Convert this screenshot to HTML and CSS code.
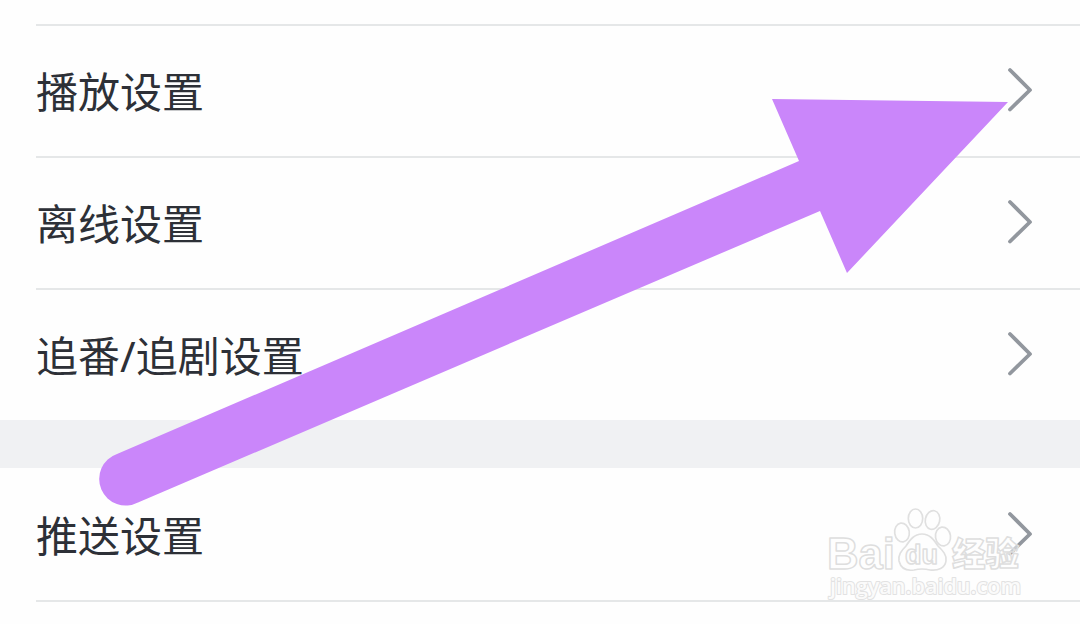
FILE: index.html
```html
<!DOCTYPE html>
<html lang="zh-CN">
<head>
<meta charset="utf-8">
<title>设置</title>
<link rel="stylesheet" href="styles.css">
</head>
<body>
<main class="screen">
  <section class="group group-first">
    <div class="row lined"><span class="label">播放设置</span><svg class="chevron" viewBox="0 0 26 46"><path d="M3 3 23 23 3 42.500"/></svg></div>
    <div class="row lined"><span class="label">离线设置</span><svg class="chevron" viewBox="0 0 26 46"><path d="M3 3 23 23 3 42.500"/></svg></div>
    <div class="row lined"><span class="label">追番<span class="slash">/</span>追剧设置</span><svg class="chevron" viewBox="0 0 26 46"><path d="M3 3 23 23 3 42.500"/></svg></div>
  </section>
  <div class="divider"></div>
  <section class="group">
    <div class="row"><span class="label">推送设置</span><svg class="chevron" viewBox="0 0 26 46"><path d="M3 3 23 23 3 42.500"/></svg></div>
    <div class="row lined"></div>
  </section>
  <svg class="arrow" viewBox="0 0 1080 624">
    <path d="M772 99 1008 102 847 273 820 211 138 502.500A26.500 26.500 0 1 1 117 454L799 161Z"/>
  </svg>
  <svg class="watermark" viewBox="820 500 220 110">
    <g class="mark">
      <ellipse cx="902" cy="532.500" rx="7.300" ry="9.500" transform="rotate(-8 902 532.500)"/>
      <ellipse cx="915.500" cy="518.500" rx="7.200" ry="9.500"/>
      <ellipse cx="932.500" cy="520" rx="7.200" ry="9.500" transform="rotate(12 932.500 520)"/>
      <ellipse cx="943" cy="536.500" rx="7.500" ry="9.500" transform="rotate(-8 943 536.500)"/>
      <path d="M922 534C914 534 910 540 906 546C901 551 898 555 899 561C901 569 907 571 914 570Q922 568 930 570C938 571 945 568 946 561C947 555 943 551 938 546C934 540 930 534 922 534Z"/>
    </g>
    <g class="mark-text">
      <text class="brand" x="827" y="569" textLength="68" lengthAdjust="spacingAndGlyphs">Bai</text>
      <text class="du" x="905" y="564" textLength="33" lengthAdjust="spacingAndGlyphs">du</text>
      <text class="brand-cn" x="952" y="566" textLength="67" lengthAdjust="spacingAndGlyphs">经验</text>
      <text class="site" x="830" y="594" textLength="191" lengthAdjust="spacingAndGlyphs">jingyan.baidu.com</text>
    </g>
  </svg>
</main>
</body>
</html>
```
FILE: styles.css
```css
body {
  margin: 0;
  background: #fefefe;
  font-family: "Noto Sans CJK SC", sans-serif;
}

.screen {
  position: relative;
  width: 1080px;
  height: 624px;
  overflow: hidden;
}

.group {
  padding-left: 36px;
}

.group-first {
  padding-top: 24px;
}

.row {
  display: flex;
  align-items: center;
  justify-content: space-between;
  box-sizing: border-box;
  height: 132px;
  padding-right: 47px;
  border-top: 2px solid transparent;
}

.lined {
  border-top-color: #e5e7e8;
}

.label {
  color: #2d3037;
  font-size: 42px;
  line-height: 60px;
  padding-bottom: 2px;
}

.slash {
  font-family: "Noto Sans", sans-serif;
  line-height: 1;
}

.chevron {
  width: 26px;
  height: 46px;
  margin-bottom: 2px;
}

.chevron path {
  fill: none;
  stroke: #92979e;
  stroke-width: 3.8px;
  stroke-linecap: round;
  stroke-linejoin: round;
}

.divider {
  height: 48px;
  background: #f0f1f3;
}

.arrow {
  position: absolute;
  inset: 0;
  width: 1080px;
  height: 624px;
  fill: #ca86fa;
}

.watermark {
  position: absolute;
  left: 820px;
  top: 500px;
  width: 220px;
  height: 110px;
}

.mark {
  fill: #fefefe;
  stroke: #e0e0e0;
  stroke-width: 1.7px;
}

.mark-text {
  fill: #fefefe;
  fill-opacity: 0.5;
  stroke: #dedede;
  stroke-width: 1.5px;
  stroke-linejoin: round;
  font-family: "Liberation Sans", "Noto Sans CJK SC", sans-serif;
}

.brand {
  font-size: 44px;
  font-weight: 700;
}

.du {
  font-size: 27px;
  font-weight: 700;
}

.brand-cn {
  font-size: 33px;
  font-weight: 900;
}

.site {
  font-family: "Open Sans", sans-serif;
  font-size: 22px;
  font-weight: 600;
  fill-opacity: 0.9;
  stroke: #e2e2e2;
  paint-order: stroke;
  stroke-width: 2px;
}
```
